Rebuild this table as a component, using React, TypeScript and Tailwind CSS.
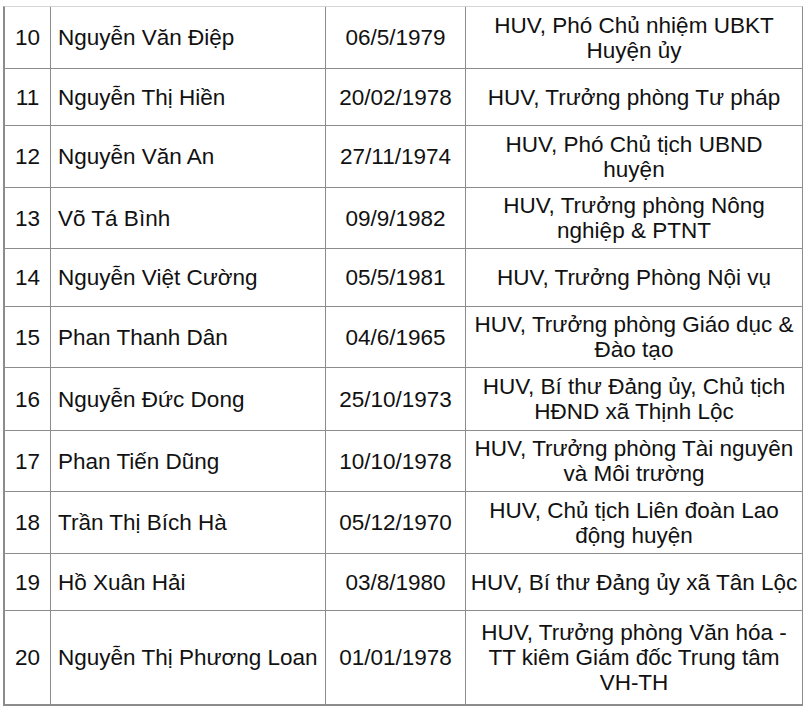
import React from "react";

type Row = { no: string; name: string; dob: string; role: string[]; h: string };

const rows: Row[] = [
  { no: "10", name: "Nguyễn Văn Điệp", dob: "06/5/1979", role: ["HUV, Phó Chủ nhiệm UBKT", "Huyện ủy"], h: "h-[62px]" },
  { no: "11", name: "Nguyễn Thị Hiền", dob: "20/02/1978", role: ["HUV, Trưởng phòng Tư pháp"], h: "h-[57px]" },
  { no: "12", name: "Nguyễn Văn An", dob: "27/11/1974", role: ["HUV, Phó Chủ tịch UBND", "huyện"], h: "h-[62px]" },
  { no: "13", name: "Võ Tá Bình", dob: "09/9/1982", role: ["HUV, Trưởng phòng Nông", "nghiệp & PTNT"], h: "h-[61px]" },
  { no: "14", name: "Nguyễn Việt Cường", dob: "05/5/1981", role: ["HUV, Trưởng Phòng Nội vụ"], h: "h-[58px]" },
  { no: "15", name: "Phan Thanh Dân", dob: "04/6/1965", role: ["HUV, Trưởng phòng Giáo dục &", "Đào tạo"], h: "h-[61px]" },
  { no: "16", name: "Nguyễn Đức Dong", dob: "25/10/1973", role: ["HUV, Bí thư Đảng ủy, Chủ tịch", "HĐND xã Thịnh Lộc"], h: "h-[63px]" },
  { no: "17", name: "Phan Tiến Dũng", dob: "10/10/1978", role: ["HUV, Trưởng phòng Tài nguyên", "và Môi trường"], h: "h-[61px]" },
  { no: "18", name: "Trần Thị Bích Hà", dob: "05/12/1970", role: ["HUV, Chủ tịch Liên đoàn Lao", "động huyện"], h: "h-[62px]" },
  { no: "19", name: "Hồ Xuân Hải", dob: "03/8/1980", role: ["HUV, Bí thư Đảng ủy xã Tân Lộc"], h: "h-[57px]" },
  { no: "20", name: "Nguyễn Thị Phương Loan", dob: "01/01/1978", role: ["HUV, Trưởng phòng Văn hóa -", "TT kiêm Giám đốc Trung tâm", "VH-TH"], h: "h-[93px]" },
];

export default function App() {
  return (
    <div className="min-h-[707px] bg-white pl-[3px] pt-[6px] font-['Liberation_Sans',Arial,sans-serif] text-[22.5px] leading-[25px] text-[#111]">
      <div className="w-[800px] border-t border-r border-b-2 border-l-2 border-[#8c8c8c] border-t-[#d4d4d4]">
        {rows.map((r, i) => (
          <div
            key={r.no}
            className={`grid grid-cols-[46px_275px_140px_336px] ${r.h} ${i < rows.length - 1 ? "border-b border-[#8c8c8c]" : ""}`}
          >
            <div className="flex items-center justify-center border-r border-[#8c8c8c]">{r.no}</div>
            <div className="flex items-center border-r border-[#8c8c8c] pl-[7px] whitespace-nowrap">{r.name}</div>
            <div className="flex items-center justify-center border-r border-[#8c8c8c] whitespace-nowrap">{r.dob}</div>
            <div className="flex flex-col items-center justify-center text-center whitespace-nowrap">
              {r.role.map((line) => (
                <span key={line}>{line}</span>
              ))}
            </div>
          </div>
        ))}
      </div>
    </div>
  );
}
